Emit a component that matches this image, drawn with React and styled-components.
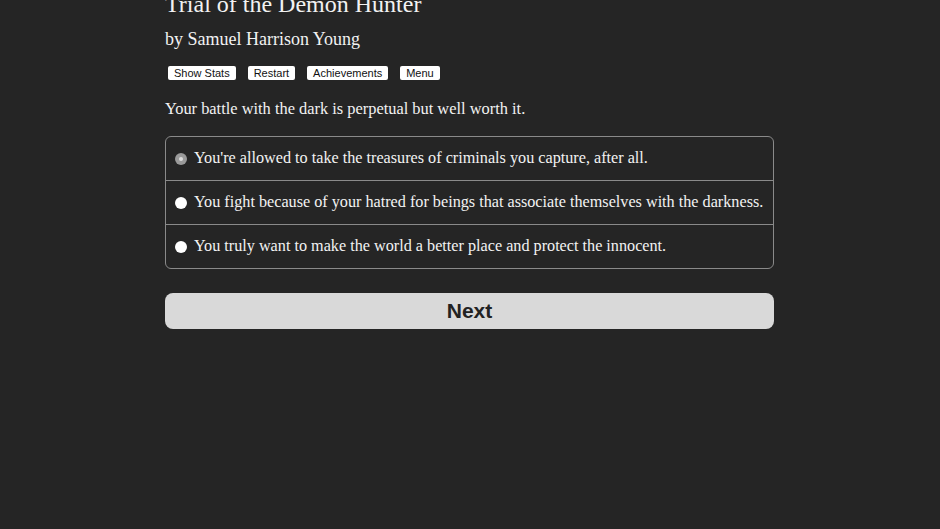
import React from "react";
import styled, { createGlobalStyle } from "styled-components";

const Global = createGlobalStyle`
  html, body { margin: 0; padding: 0; background: #252525; }
  body { font-family: "Liberation Serif", "DejaVu Serif", serif; color: #f2f2f2; }
`;

const Page = styled.div`
  width: 609px;
  margin: 0 auto 0 165px;
  display: flex;
  flex-direction: column;
`;

const Title = styled.h1`
  margin: -10px 0 0 0;
  font-size: 24px;
  font-weight: normal;
  line-height: 28px;
`;

const Author = styled.h2`
  margin: 10px 0 0 0;
  font-size: 18px;
  font-weight: normal;
  line-height: 22px;
`;

const Toolbar = styled.div`
  display: flex;
  gap: 12px;
  margin: 16px 0 0 3px;
`;

const ToolButton = styled.button`
  font-family: "Liberation Sans", Arial, sans-serif;
  font-size: 11px;
  line-height: 12px;
  padding: 1px 6px;
  background: #fff;
  color: #111;
  border: none;
  border-radius: 2px;
  height: 14px;
`;

const Text = styled.p`
  margin: 19px 0 0 0;
  font-size: 16.4px;
  line-height: 20px;
`;

const Choices = styled.div`
  margin-top: 17px;
  border: 1px solid #8a8a8a;
  border-radius: 6px;
  display: flex;
  flex-direction: column;
  overflow: hidden;
`;

const Choice = styled.label`
  display: flex;
  align-items: center;
  height: 43px;
  padding-left: 9px;
  font-size: 16.2px;
  border-top: ${(p) => (p.$first ? "none" : "1px solid #8a8a8a")};
`;

const Radio = styled.span`
  width: 12px;
  height: 12px;
  border-radius: 50%;
  background: ${(p) => (p.$checked ? "#9a9a9a" : "#fff")};
  margin-right: 7px;
  display: flex;
  align-items: center;
  justify-content: center;
  flex-shrink: 0;
  &::after {
    content: "";
    width: 4px;
    height: 4px;
    border-radius: 50%;
    background: ${(p) => (p.$checked ? "#ddd" : "transparent")};
  }
`;

const Next = styled.button`
  margin-top: 24px;
  height: 36px;
  border: none;
  border-radius: 8px;
  background: #d9d9d9;
  color: #222;
  font-family: "Liberation Sans", Arial, sans-serif;
  font-weight: bold;
  font-size: 21px;
`;

const options = [
  "You're allowed to take the treasures of criminals you capture, after all.",
  "You fight because of your hatred for beings that associate themselves with the darkness.",
  "You truly want to make the world a better place and protect the innocent.",
];

export default function App() {
  return (
    <>
      <Global />
      <Page>
        <Title>Trial of the Demon Hunter</Title>
        <Author>by Samuel Harrison Young</Author>
        <Toolbar>
          <ToolButton>Show Stats</ToolButton>
          <ToolButton>Restart</ToolButton>
          <ToolButton>Achievements</ToolButton>
          <ToolButton>Menu</ToolButton>
        </Toolbar>
        <Text>Your battle with the dark is perpetual but well worth it.</Text>
        <Choices>
          {options.map((o, i) => (
            <Choice key={i} $first={i === 0}>
              <Radio $checked={i === 0} />
              {o}
            </Choice>
          ))}
        </Choices>
        <Next>Next</Next>
      </Page>
    </>
  );
}
